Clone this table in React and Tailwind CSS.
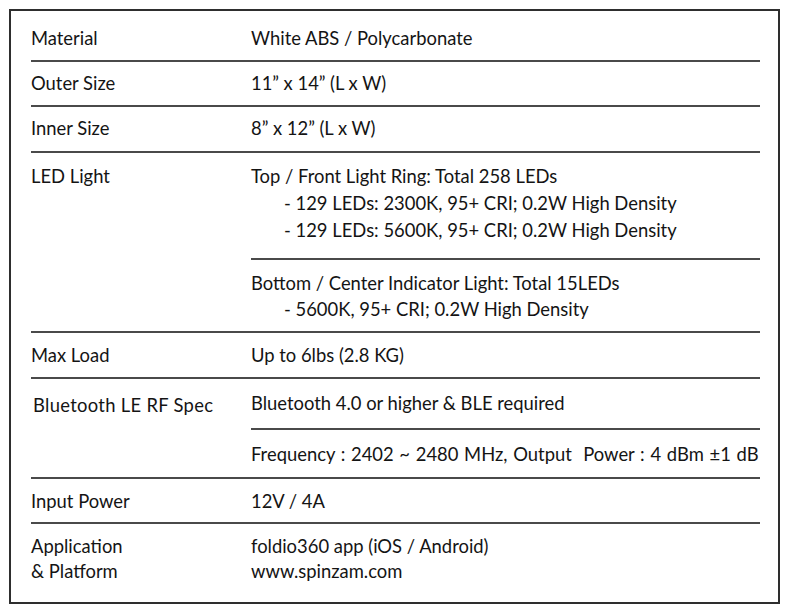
import React from "react";

const rule = "h-[2px] bg-[#4a4a4a]";

export default function App() {
  return (
    <div
      className="min-h-screen bg-white text-[#141414] text-[18.4px] leading-[26px]"
      style={{ fontFamily: "Lato, 'Open Sans', sans-serif" }}
    >
      <div className="pt-[9px] pl-[9px]">
        <div className="w-[771px] h-[595px] border-2 border-[#2e2e2e] pl-[20px] pr-[18px]">
          {/* Material */}
          <div>
            <div className="flex pt-[14px] pb-[9px]">
              <div className="w-[220px] shrink-0">Material</div>
              <div className="flex-1">White ABS / Polycarbonate</div>
            </div>
            <div className={rule} />
          </div>

          {/* Outer Size */}
          <div>
            <div className="flex pt-[8px] pb-[9px]">
              <div className="w-[220px] shrink-0">Outer Size</div>
              <div className="flex-1">11” x 14” (L x W)</div>
            </div>
            <div className={rule} />
          </div>

          {/* Inner Size */}
          <div>
            <div className="flex pt-[8px] pb-[10px]">
              <div className="w-[220px] shrink-0">Inner Size</div>
              <div className="flex-1">8” x 12” (L x W)</div>
            </div>
            <div className={rule} />
          </div>

          {/* LED Light */}
          <div>
            <div className="flex">
              <div className="w-[220px] shrink-0 pt-[10px]">LED Light</div>
              <div className="flex-1">
                <div className="pt-[10px] pb-[14px] leading-[27px]">
                  <div>Top / Front Light Ring: Total 258 LEDs</div>
                  <div className="pl-[33px]">- 129 LEDs: 2300K, 95+ CRI; 0.2W High Density</div>
                  <div className="pl-[33px]">- 129 LEDs: 5600K, 95+ CRI; 0.2W High Density</div>
                </div>
                <div className={rule} />
                <div className="pt-[10px] pb-[9px]">
                  <div>Bottom / Center Indicator Light: Total 15LEDs</div>
                  <div className="pl-[33px]">- 5600K, 95+ CRI; 0.2W High Density</div>
                </div>
              </div>
            </div>
            <div className={rule} />
          </div>

          {/* Max Load */}
          <div>
            <div className="flex pt-[9px] pb-[9px]">
              <div className="w-[220px] shrink-0">Max Load</div>
              <div className="flex-1">Up to 6lbs (2.8 KG)</div>
            </div>
            <div className={rule} />
          </div>

          {/* Bluetooth */}
          <div>
            <div className="flex">
              <div className="w-[220px] shrink-0 pt-[13px] pl-[2px] tracking-[0.3px]">Bluetooth LE RF Spec</div>
              <div className="flex-1">
                <div className="pt-[11px] pb-[12px]">Bluetooth 4.0 or higher&nbsp;&amp; BLE required</div>
                <div className={rule} />
                <div className="pt-[11px] pb-[10px] whitespace-nowrap [word-spacing:1px]">
                  Frequency : 2402 ~ 2480 MHz, Output&nbsp; Power : 4 dBm ±1 dB
                </div>
              </div>
            </div>
            <div className={rule} />
          </div>

          {/* Input Power */}
          <div>
            <div className="flex pt-[9px] pb-[8px]">
              <div className="w-[220px] shrink-0">Input Power</div>
              <div className="flex-1">12V / 4A</div>
            </div>
            <div className={rule} />
          </div>

          {/* Application */}
          <div className="flex pt-[10px] leading-[25px]">
            <div className="w-[220px] shrink-0">
              <div>Application</div>
              <div>&amp; Platform</div>
            </div>
            <div className="flex-1">
              <div>foldio360 app (iOS / Android)</div>
              <div>www.spinzam.com</div>
            </div>
          </div>
        </div>
      </div>
    </div>
  );
}
